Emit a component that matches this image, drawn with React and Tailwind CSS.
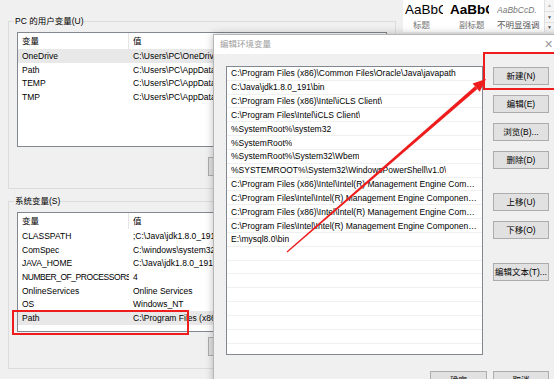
import React from 'react';

const userVars = [
  ['OneDrive', 'C:\\Users\\PC\\OneDrive', true],
  ['Path', 'C:\\Users\\PC\\AppData\\Local\\Microsoft\\WindowsApps;'],
  ['TEMP', 'C:\\Users\\PC\\AppData\\Local\\Temp'],
  ['TMP', 'C:\\Users\\PC\\AppData\\Local\\Temp'],
];

const sysVars = [
  ['CLASSPATH', ';C:\\Java\\jdk1.8.0_191\\lib'],
  ['ComSpec', 'C:\\windows\\system32\\cmd.exe'],
  ['JAVA_HOME', 'C:\\Java\\jdk1.8.0_191'],
  ['NUMBER_OF_PROCESSORS', '4'],
  ['OnlineServices', 'Online Services'],
  ['OS', 'Windows_NT'],
  ['Path', 'C:\\Program Files (x86)\\Common Files\\Oracle\\Java\\javapath', true],
];

const pathItems = [
  'C:\\Program Files (x86)\\Common Files\\Oracle\\Java\\javapath',
  'C:\\Java\\jdk1.8.0_191\\bin',
  'C:\\Program Files (x86)\\Intel\\iCLS Client\\',
  'C:\\Program Files\\Intel\\iCLS Client\\',
  '%SystemRoot%\\system32',
  '%SystemRoot%',
  '%SystemRoot%\\System32\\Wbem',
  '%SYSTEMROOT%\\System32\\WindowsPowerShell\\v1.0\\',
  'C:\\Program Files (x86)\\Intel\\Intel(R) Management Engine Components\\DAL',
  'C:\\Program Files\\Intel\\Intel(R) Management Engine Components\\DAL',
  'C:\\Program Files (x86)\\Intel\\Intel(R) Management Engine Components\\IPT',
  'C:\\Program Files\\Intel\\Intel(R) Management Engine Components\\IPT',
  'E:\\mysql8.0\\bin',
  '', '', '', '', '', '', '', '',
];

const WinButton = ({ children, className = '' }) => (
  <div className={`h-[18px] flex items-center justify-center whitespace-nowrap bg-[#e1e1e1] border border-[#adadad] text-black ${className}`}>
    {children}
  </div>
);

const VarList = ({ rows, height }) => (
  <div className="ml-[8px] w-[370px] bg-white border border-[#828790] overflow-hidden" style={{ height }}>
    <div className="h-[16px] flex items-center">
      <div className="w-[111px] shrink-0 h-full flex items-center pl-[4px] border-r border-[#e5e5e5]">变量</div>
      <div className="pl-[4px]">值</div>
    </div>
    {rows.map(([name, value, selected]) => (
      <div key={name + value} className={`h-[13.7px] flex items-center whitespace-nowrap leading-[12px] ${selected ? 'bg-[#e8e8e8]' : ''}`}>
        <div className={`w-[111px] shrink-0 pl-[4px] overflow-hidden ${name.length > 16 ? 'tracking-[-0.45px]' : ''}`}>{name}</div>
        <div className="pl-[4px]">{value}</div>
      </div>
    ))}
  </div>
);

const Ribbon = () => (
  <div className="absolute left-[403px] top-0 w-[151px] h-[32px] bg-white flex">
    <div className="w-[46px] flex flex-col items-start pl-[2px]">
      <div className="w-[38px] overflow-hidden whitespace-nowrap text-[13.5px] leading-[20px] text-black">AaBbCc</div>
      <div className="text-[8.5px] text-[#777] pl-[8px] mt-[1px]">标题</div>
    </div>
    <div className="w-[48px] flex flex-col items-start pl-[1px]">
      <div className="w-[39px] overflow-hidden whitespace-nowrap text-[13.5px] leading-[20px] font-bold text-black">AaBbCc</div>
      <div className="text-[8.5px] text-[#777] pl-[9px] mt-[1px]">副标题</div>
    </div>
    <div className="w-[44px] flex flex-col items-start">
      <div className="w-[42px] overflow-hidden whitespace-nowrap text-[8.5px] leading-[20px] italic text-[#777]">AaBbCcD.</div>
      <div className="text-[8.5px] text-[#555] mt-[1px] whitespace-nowrap">不明显强调</div>
    </div>
    <div className="ml-auto w-[10px] flex flex-col border-l border-[#e0e0e0] bg-[#f5f5f5]">
      <div className="h-[11px] flex items-center justify-center text-[5px] text-[#bbb]">▲</div>
      <div className="h-[11px] flex items-center justify-center text-[5px] text-[#555] border-t border-[#e0e0e0]">▼</div>
      <div className="h-[10px] flex items-center justify-center text-[5px] text-[#555] border-t border-[#e0e0e0]">▼</div>
    </div>
  </div>
);

const Annotations = () => {
  // arrow from lower left toward the 新建 button
  const sx = 287, sy = 252, tx = 486, ty = 79;
  const len = Math.hypot(tx - sx, ty - sy);
  const ux = (tx - sx) / len, uy = (ty - sy) / len;
  const px = -uy, py = ux;
  const bx = tx - 13 * ux, by = ty - 13 * uy;
  const shaft = [
    [sx + 0.6 * px, sy + 0.6 * py],
    [bx + 1.8 * px, by + 1.8 * py],
    [bx - 1.8 * px, by - 1.8 * py],
    [sx - 0.6 * px, sy - 0.6 * py],
  ];
  const head = [
    [tx, ty],
    [bx + 5.5 * px, by + 5.5 * py],
    [bx - 5.5 * px, by - 5.5 * py],
  ];
  const pts = (a) => a.map(([x, y]) => `${x.toFixed(1)},${y.toFixed(1)}`).join(' ');
  return (
    <>
      <div className="absolute left-[12px] top-[310px] w-[177px] h-[25px] border-2 border-[#ee1c1c]" />
      <div className="absolute left-[483px] top-[52px] w-[80px] h-[38px] border-2 border-[#ee1c1c]" />
      <svg className="absolute left-0 top-0" width="554" height="379" viewBox="0 0 554 379">
        <polygon points={pts(shaft)} fill="#ee1c1c" />
        <polygon points={pts(head)} fill="#ee1c1c" />
      </svg>
    </>
  );
};

export default function App() {
  return (
    <div className="relative w-[554px] h-[379px] overflow-hidden bg-[#f0f0f0] text-[8.5px] leading-none text-black font-['Liberation_Sans','Noto_Sans_CJK_SC',sans-serif]">
      {/* parent dialog: 环境变量 */}
      <div className="absolute left-0 top-0 w-[400px] h-[379px] bg-[#f0f0f0] pl-[8px] pt-[14px]">
        <fieldset className="w-[388px] h-[175px] border border-[#dcdcdc]">
          <legend className="ml-[5px] px-[1px] leading-[14px]">PC 的用户变量(U)</legend>
          <div className="mt-[4px]">
            <VarList rows={userVars} height={115} />
          </div>
          <div className="mt-[10px] flex pl-[199px]">
            <WinButton className="w-[70px] h-[19px]">新建(W)...</WinButton>
          </div>
        </fieldset>
        <fieldset className="mt-[5px] w-[388px] h-[175px] border border-[#dcdcdc]">
          <legend className="ml-[5px] px-[1px] leading-[14px]">系统变量(S)</legend>
          <div className="mt-[4px]">
            <VarList rows={sysVars} height={120} />
          </div>
          <div className="mt-[5px] flex pl-[199px]">
            <WinButton className="w-[70px] h-[19px]">新建(W)...</WinButton>
          </div>
        </fieldset>
      </div>

      <Ribbon />

      {/* edit dialog: 编辑环境变量 */}
      <div className="absolute left-[213px] top-[34px] w-[352px] h-[360px] bg-[#f0f0f0] border border-[#b5b5b5] shadow-[0_0_8px_rgba(0,0,0,0.25)]">
        <div className="h-[19px] bg-white flex items-center justify-between pl-[6px] pr-[11px] whitespace-nowrap text-[#a0a0a0]">
          <span>编辑环境变量</span>
          <span className="text-[11px] text-[#999] font-['DejaVu_Sans',sans-serif] font-light">✕</span>
        </div>
        <div className="flex pt-[12px] pl-[12px]">
          <div className="w-[257px] h-[289px] shrink-0 bg-white border border-[#828790] overflow-hidden">
            {pathItems.map((p, i) => (
              <div key={i} className="h-[13.83px] flex items-center pl-[4px] pr-[4px] border-b border-[#f0f0f0]">
                <span className="truncate leading-[12px]">{p}</span>
              </div>
            ))}
          </div>
          <div className="ml-[10px] mt-[1px] w-[56px] shrink-0 flex flex-col">
            <WinButton>新建(N)</WinButton>
            <WinButton className="mt-[10px]">编辑(E)</WinButton>
            <WinButton className="mt-[10px]">浏览(B)...</WinButton>
            <WinButton className="mt-[10px]">删除(D)</WinButton>
            <WinButton className="mt-[24px]">上移(U)</WinButton>
            <WinButton className="mt-[10px]">下移(O)</WinButton>
            <WinButton className="mt-[24px]">编辑文本(T)...</WinButton>
          </div>
        </div>
        <div className="mt-[16px] flex pl-[216px]">
          <WinButton className="w-[57px]">确定</WinButton>
          <WinButton className="ml-[6px] w-[56px]">取消</WinButton>
        </div>
      </div>

      <Annotations />
    </div>
  );
}
